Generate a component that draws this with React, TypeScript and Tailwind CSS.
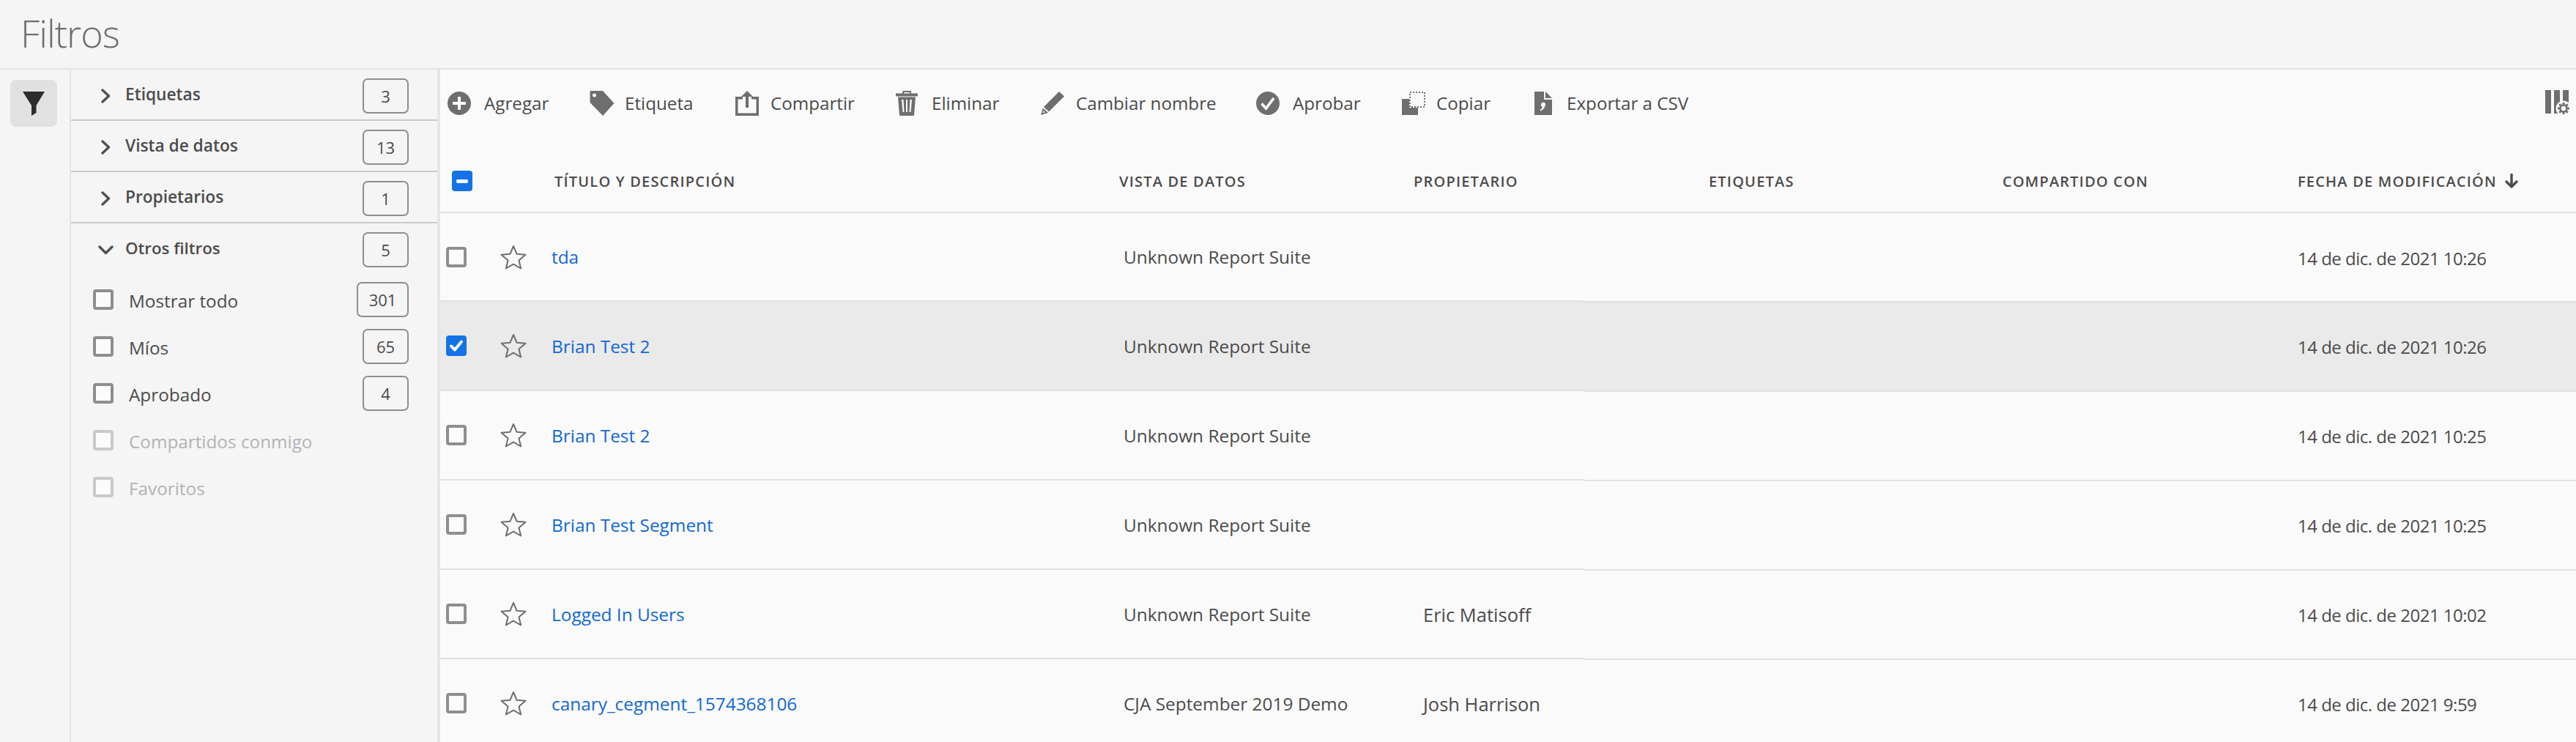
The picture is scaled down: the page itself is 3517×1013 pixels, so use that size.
import React from "react";

const I = "#6e6e6e";

function Svg({ w, h, children, className = "" }: { w: number; h: number; children: React.ReactNode; className?: string }) {
  return (
    <svg width={w} height={h} viewBox={`0 0 ${w} ${h}`} className={`shrink-0 ${className}`}>
      {children}
    </svg>
  );
}

const AddIcon = () => (
  <Svg w={32} h={32}>
    <circle cx="16" cy="16" r="16" fill={I} />
    <rect x="14" y="7" width="4" height="18" rx="1" fill="#fff" />
    <rect x="7" y="14" width="18" height="4" rx="1" fill="#fff" />
  </Svg>
);
const TagIcon = () => (
  <Svg w={34} h={34}>
    <path fillRule="evenodd" fill={I} d="M1.5 0H18L33.5 17 18 34 .5 16V1.5A1.2 1.2 0 0 1 1.500 0ZM6.500 3.500a2.500 2.500 0 1 0 0 5 2.500 2.500 0 0 0 0-5Z" />
  </Svg>
);
const ShareIcon = () => (
  <Svg w={32} h={34}>
    <path fill={I} d="M16 0 24 8H18V23H14V8H8Z" />
    <path fill={I} d="M0 8H10V11.500H3.500V30.500H28.500V11.500H22V8H32V34H0Z" />
  </Svg>
);
const TrashIcon = () => (
  <Svg w={30} h={34}>
    <path fill={I} d="M9 3.500V1.500Q9 0 10.500 0H19.500Q21 0 21 1.500V3.500H30V7.500H0V3.500ZM11 3.500H19V2H11Z" fillRule="evenodd" />
    <path fill={I} fillRule="evenodd" d="M3 8.500H27L25 33Q25 34 24 34H6Q5 34 5 33ZM8 12 9.500 29H11.500L10.500 12ZM14 12V29H16V12ZM19.500 12 18.500 29H20.500L22 12Z" />
  </Svg>
);
const PencilIcon = () => (
  <Svg w={32} h={32}>
    <path fill={I} d="M25 0 32 6.500 11 27.500 4 21Z" />
    <path fill={I} fillRule="evenodd" d="M3 22.500 10 29 0 32ZM3.800 26 2.700 29.300 6 28.300Z" />
  </Svg>
);
const CheckCircleIcon = () => (
  <Svg w={32} h={32}>
    <circle cx="16" cy="16" r="16" fill={I} />
    <path d="M7.500 16.500 13.500 23 24 9" fill="none" stroke="#fff" strokeWidth="3.600" />
  </Svg>
);
const CopyIcon = () => (
  <Svg w={32} h={32}>
    <path fill={I} d="M0 10H10V22H22V32H0Z" />
    <rect x="11" y="1" width="20" height="20" fill="none" stroke={I} strokeWidth="2" strokeDasharray="2 2" />
  </Svg>
);
const CsvIcon = () => (
  <Svg w={24} h={32}>
    <path fill={I} d="M0 0H13V11H24V32H0Z" />
    <path fill={I} d="M15 0 24 9H15Z" />
    <path fill="#fff" d="M9 17.500a3 3 0 1 1 5.500 1.800C14 22 12 25 8.500 26.500L7.500 25C9.500 24 10.500 22.500 11 21a3 3 0 0 1-2-3.500Z" />
  </Svg>
);
const ColumnsIcon = () => (
  <Svg w={35} h={36}>
    <rect x="0" y="0" width="8" height="32" fill={I} />
    <rect x="12" y="0" width="8" height="32" fill={I} />
    <rect x="24" y="0" width="8" height="32" fill={I} />
    <circle cx="25" cy="25" r="10.500" fill="#fafafa" />
    <g stroke={I} strokeWidth="3">
      <path d="M25 17v16M17 25h16M19.300 19.300l11.400 11.400M30.700 19.300 19.300 30.700" />
    </g>
    <circle cx="25" cy="25" r="4.500" fill="#fafafa" stroke={I} strokeWidth="2.500" />
  </Svg>
);
const FilterIcon = () => (
  <Svg w={30} h={33}>
    <path fill="#2c2c2c" d="M0 0H30L18.500 19V29L12 33V19Z" />
  </Svg>
);

function Chevron() {
  return (
    <span className="flex w-[13px] shrink-0">
      <Svg w={13} h={20}>
        <path d="M2 2 10.500 10 2 18" fill="none" stroke="#505050" strokeWidth="3.400" strokeLinecap="round" strokeLinejoin="round" />
      </Svg>
    </span>
  );
}
function ChevronDown() {
  return (
    <Svg w={21} h={13}>
      <path d="M2 2 10.500 10.500 19 2" fill="none" stroke="#505050" strokeWidth="3.400" strokeLinecap="round" strokeLinejoin="round" />
    </Svg>
  );
}

function Badge({ n, wide }: { n: string; wide?: boolean }) {
  return (
    <span className={`flex h-[48px] shrink-0 items-center justify-center rounded-[7px] border-2 border-[#8e8e8e] text-[22px] text-[#4b4b4b] ${wide ? "w-[71px]" : "w-[63px]"}`}>
      {n}
    </span>
  );
}

function Check({ disabled }: { disabled?: boolean }) {
  return (
    <span className={`block h-[28px] w-[28px] shrink-0 rounded-[4px] border-4 bg-[#fbfbfb] ${disabled ? "border-[#c9c9c9]" : "border-[#8e8e8e]"}`} />
  );
}
function Checked() {
  return (
    <span className="flex h-[28px] w-[28px] shrink-0 items-center justify-center rounded-[4px] bg-[#1473e6]">
      <Svg w={20} h={18}>
        <path d="M3 9.500 8 14.500 17 3.500" fill="none" stroke="#fff" strokeWidth="4" strokeLinecap="round" strokeLinejoin="round" />
      </Svg>
    </span>
  );
}
function Minus() {
  return (
    <span className="flex h-[28px] w-[28px] shrink-0 items-center justify-center rounded-[4px] bg-[#1473e6]">
      <span className="block h-[5px] w-[16px] rounded-[2px] bg-white" />
    </span>
  );
}
function Star() {
  return (
    <Svg w={36} h={34}>
      <path d="M18 2 22.500 12.700 34.500 13.700 25.400 21.400 28.200 32.500 18 26.700 7.800 32.500 10.600 21.400 1.500 13.700 13.500 12.700Z" fill="none" stroke={I} strokeWidth="2" strokeLinejoin="round" />
    </Svg>
  );
}

function Section({ label }: { label: string }) {
  return (
    <div className="flex h-[70px] border-b-2 border-[#cacaca] pl-[41px] pr-[39px] pt-[12px]">
      <div className="flex h-[48px] flex-1 items-center justify-between">
        <div className="flex items-center">
          <Chevron />
          <span className="ml-[20px] -translate-y-[2px] text-[22.700px] font-semibold text-[#4b4b4b]">{label}</span>
        </div>
        <Badge n={label === "Etiquetas" ? "3" : label === "Vista de datos" ? "13" : "1"} />
      </div>
    </div>
  );
}

function FilterRow({ label, n, wide, disabled }: { label: string; n?: string; wide?: boolean; disabled?: boolean }) {
  return (
    <div className="flex h-[64px] items-center justify-between pl-[30px] pr-[39px]">
      <div className="flex items-center">
        <Check disabled={disabled} />
        <span className={`ml-[21px] translate-y-[2px] text-[24.300px] ${disabled ? "text-[#b3b3b3]" : "text-[#4b4b4b]"}`}>{label}</span>
      </div>
      {n && <Badge n={n} wide={wide} />}
    </div>
  );
}

const rows = [
  { t: "tda", v: "Unknown Report Suite", o: "", d: "14 de dic. de 2021 10:26" },
  { t: "Brian Test 2", v: "Unknown Report Suite", o: "", d: "14 de dic. de 2021 10:26", sel: true },
  { t: "Brian Test 2", v: "Unknown Report Suite", o: "", d: "14 de dic. de 2021 10:25" },
  { t: "Brian Test Segment", v: "Unknown Report Suite", o: "", d: "14 de dic. de 2021 10:25" },
  { t: "Logged In Users", v: "Unknown Report Suite", o: "Eric Matisoff", d: "14 de dic. de 2021 10:02" },
  { t: "canary_cegment_1574368106", v: "CJA September 2019 Demo", o: "Josh Harrison", d: "14 de dic. de 2021 9:59" },
];

function Row({ r, first }: { r: (typeof rows)[number]; first: boolean }) {
  const bg = r.sel ? "bg-[#eaeaea]" : "";
  return (
    <div className={`flex shrink-0 ${first ? "h-[121px]" : "h-[122px]"}`}>
      <div className={`grid w-[1561px] shrink-0 grid-cols-[82px_70px_781px_409px_219px] items-center border-b-2 border-[#e1e1e1] text-[24.400px] text-[#4b4b4b] ${bg}`}>
        <div className="pl-[8px]">{r.sel ? <Checked /> : <Check />}</div>
        <div className="flex"><Star /></div>
        <div className="translate-y-[1px] text-[#1268d3]">{r.t}</div>
        <div className="translate-y-[1px]">{r.v}</div>
        <div className="translate-y-[1px] whitespace-nowrap text-[25.500px]">{r.o}</div>
      </div>
      <div className={`flex flex-1 translate-y-px items-center border-b-2 border-[#e1e1e1] pl-[975px] text-[24px] tracking-[-0.5px] text-[#4b4b4b] ${bg}`}>
        <span className="translate-y-[1px] whitespace-nowrap">{r.d}</span>
      </div>
    </div>
  );
}

const headClass = "translate-y-[1px] whitespace-nowrap text-[20px] font-semibold uppercase tracking-[1.2px] text-[#4b4b4b]";

export default function App() {
  return (
    <div className="flex h-screen w-full flex-col overflow-hidden bg-[#f5f5f5] font-['Open_Sans',sans-serif]">
      <header className="flex h-[95px] shrink-0 items-center border-b-2 border-[#e3e3e3] pl-[28px]">
        <h1 className="-translate-y-[2px] text-[52px] font-light tracking-[-1px] text-[#6e6e6e]">Filtros</h1>
      </header>
      <div className="flex min-h-0 flex-1">
        <aside className="w-[97px] shrink-0 border-r-2 border-[#e3e3e3] pl-[14px] pt-[14px]">
          <div className="flex h-[64px] w-[64px] items-center justify-center rounded-[8px] bg-[#e1e1e1]">
            <FilterIcon />
          </div>
        </aside>
        <aside className="w-[504px] shrink-0 border-r-4 border-[#e6e6e6]">
          <Section label="Etiquetas" />
          <Section label="Vista de datos" />
          <Section label="Propietarios" />
          <div className="flex h-[72px] pl-[37px] pr-[39px] pt-[12px]">
            <div className="flex h-[48px] flex-1 items-center justify-between">
              <div className="flex items-center">
                <ChevronDown />
                <span className="ml-[16px] -translate-y-[2px] text-[22.300px] font-semibold text-[#4b4b4b]">Otros filtros</span>
              </div>
              <Badge n="5" />
            </div>
          </div>
          <FilterRow label="Mostrar todo" n="301" wide />
          <FilterRow label="Míos" n="65" />
          <FilterRow label="Aprobado" n="4" />
          <FilterRow label="Compartidos conmigo" disabled />
          <FilterRow label="Favoritos" disabled />
        </aside>
        <main className="flex min-w-0 flex-1 flex-col bg-[#fafafa]">
          <div className="flex h-[110px] shrink-0 pb-[18px] pl-[10px] pr-[7px]">
            <div className="flex flex-1 items-center text-[24.200px] text-[#4b4b4b]">
              <div className="flex w-[194px] items-center gap-[18px]"><AddIcon /><span>Agregar</span></div>
              <div className="flex w-[199px] items-center gap-[14px]"><TagIcon /><span>Etiqueta</span></div>
              <div className="flex w-[219px] items-center gap-[16px]"><ShareIcon /><span>Compartir</span></div>
              <div className="flex w-[198px] items-center gap-[19px]"><TrashIcon /><span>Eliminar</span></div>
              <div className="flex w-[294px] items-center gap-[16px]"><PencilIcon /><span>Cambiar nombre</span></div>
              <div className="flex w-[199px] items-center gap-[18px]"><CheckCircleIcon /><span>Aprobar</span></div>
              <div className="flex w-[181px] items-center gap-[15px]"><CopyIcon /><span>Copiar</span></div>
              <div className="flex items-center gap-[20px]"><CsvIcon /><span>Exportar a CSV</span></div>
            </div>
            <div className="flex items-center"><ColumnsIcon /></div>
          </div>
          <div className="grid h-[86px] shrink-0 grid-cols-[156px_771px_402px_403px_401px_403px_1fr] items-center border-b-2 border-[#e1e1e1]">
            <div className="pl-[16px]"><Minus /></div>
            <div className={headClass}>Título y descripción</div>
            <div className={headClass}>Vista de datos</div>
            <div className={headClass}>Propietario</div>
            <div className={headClass}>Etiquetas</div>
            <div className={headClass}>Compartido con</div>
            <div className="flex items-center gap-[11px]">
              <span className={headClass}>Fecha de modificación</span>
              <Svg w={18} h={20}>
                <path d="M9 1V18M2 11 9 18 16 11" fill="none" stroke="#4b4b4b" strokeWidth="3.400" strokeLinejoin="round" strokeLinecap="round" />
              </Svg>
            </div>
          </div>
          {rows.map((r, i) => (
            <Row key={i} r={r} first={i === 0} />
          ))}
        </main>
      </div>
    </div>
  );
}
